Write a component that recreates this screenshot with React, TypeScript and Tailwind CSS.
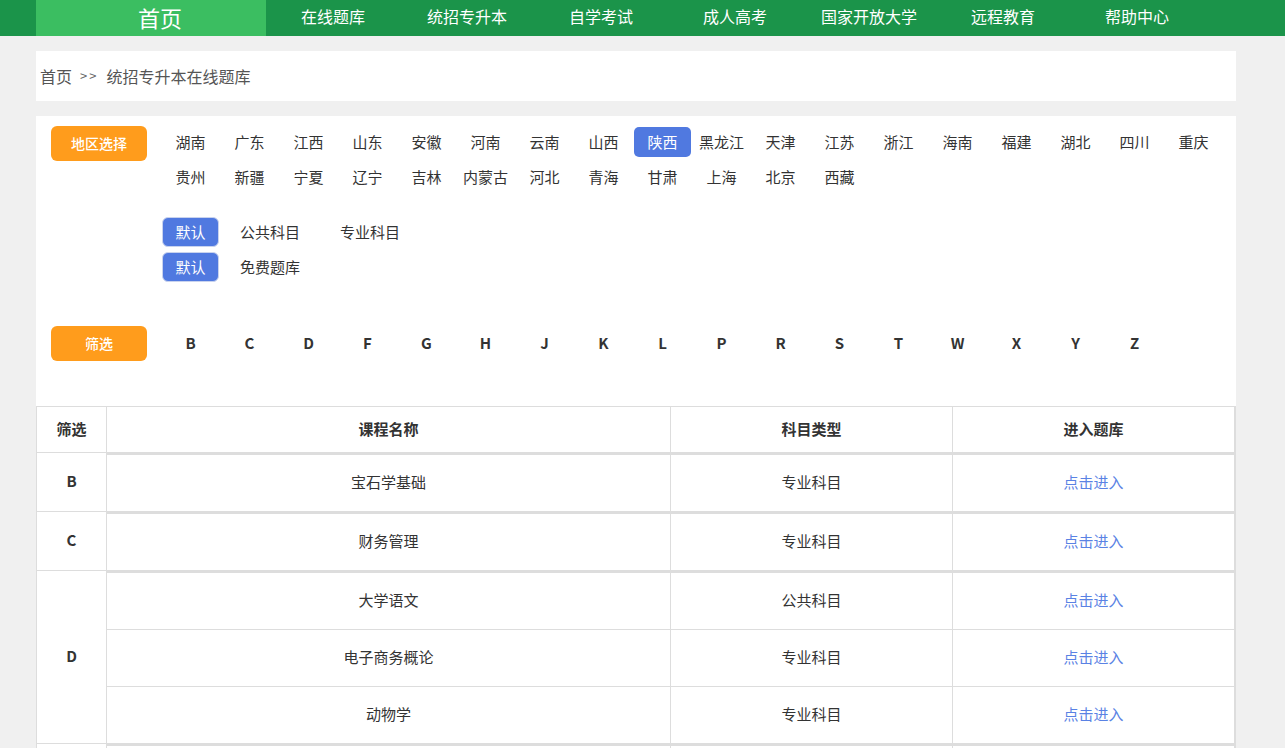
import React from "react";

const navItems = ["在线题库", "统招专升本", "自学考试", "成人高考", "国家开放大学", "远程教育", "帮助中心"];
const provinces = [
  "湖南", "广东", "江西", "山东", "安徽", "河南", "云南", "山西", "陕西", "黑龙江", "天津", "江苏", "浙江", "海南", "福建", "湖北", "四川", "重庆",
  "贵州", "新疆", "宁夏", "辽宁", "吉林", "内蒙古", "河北", "青海", "甘肃", "上海", "北京", "西藏",
];
const letters = ["B", "C", "D", "F", "G", "H", "J", "K", "L", "P", "R", "S", "T", "W", "X", "Y", "Z"];

const groups: { letter: string; rows: [string, string][] }[] = [
  { letter: "B", rows: [["宝石学基础", "专业科目"]] },
  { letter: "C", rows: [["财务管理", "专业科目"]] },
  { letter: "D", rows: [["大学语文", "公共科目"], ["电子商务概论", "专业科目"], ["动物学", "专业科目"]] },
  { letter: "F", rows: [["法学概论", "专业科目"], ["服装设计基础", "专业科目"]] },
  { letter: "G", rows: [["高等数学", "公共科目"], ["管理学原理", "专业科目"]] },
];

export default function App() {
  return (
    <div className="min-h-[748px] bg-[#f0f0f0] font-['Noto_Sans_CJK_SC','Noto_Sans',sans-serif] text-[#333]">
      {/* nav */}
      <div className="h-[36px] w-full bg-[#1b944a]">
        <div className="ml-[36px] flex h-[36px] w-[1200px]">
          <div className="flex w-[230px] items-center justify-center bg-[#3bbe61] pb-[3px] pl-[18px] text-[22px] leading-none text-white">首页</div>
          {navItems.map((n) => (
            <div key={n} className="flex w-[134px] items-center justify-center pb-[4px] text-[16px] leading-none text-white">
              {n}
            </div>
          ))}
        </div>
      </div>

      {/* breadcrumb */}
      <div className="ml-[36px] mt-[15px] flex h-[50px] w-[1200px] items-center bg-white pl-[4px] text-[16px] text-[#555]">
        <span>首页</span>
        <span className="mx-[8px] text-[13px] tracking-[2px] text-[#666]">&gt;&gt;</span>
        <span>统招专升本在线题库</span>
      </div>

      {/* main */}
      <div className="ml-[36px] mt-[15px] w-[1200px] bg-white pt-[10px]">
        {/* region */}
        <div className="flex pl-[15px]">
          <div className="flex h-[35px] w-[96px] shrink-0 items-center justify-center rounded-[6px] bg-[#ff9c1c] text-[14px] font-medium text-white">
            地区选择
          </div>
          <div className="ml-[14px] mt-[1px] flex w-[1062px] flex-wrap">
            {provinces.map((p) => (
              <div key={p} className="h-[35px] w-[59px] px-[1px] pb-[5px]">
                <div
                  className={
                    p === "陕西"
                      ? "flex h-[30px] items-center justify-center rounded-[5px] bg-[#5079e0] text-[15px] text-white"
                      : "flex h-[30px] items-center justify-center text-[15px] text-[#333]"
                  }
                >
                  {p}
                </div>
              </div>
            ))}
          </div>
        </div>

        {/* subject type */}
        <div className="ml-[125px] mt-[20px]">
          <div className="flex h-[35px]">
            <div className="w-[59px] px-[1px] pb-[5px]">
              <div className="flex h-[30px] items-center justify-center rounded-[6px] border border-[#c9d3ee] bg-[#5079e0] text-[15px] text-white">默认</div>
            </div>
            <div className="flex h-[30px] w-[100px] items-center justify-center text-[15px]">公共科目</div>
            <div className="flex h-[30px] w-[100px] items-center justify-center text-[15px]">专业科目</div>
          </div>
          <div className="flex h-[35px]">
            <div className="w-[59px] px-[1px] pb-[5px]">
              <div className="flex h-[30px] items-center justify-center rounded-[6px] border border-[#c9d3ee] bg-[#5079e0] text-[15px] text-white">默认</div>
            </div>
            <div className="flex h-[30px] w-[100px] items-center justify-center text-[15px]">免费题库</div>
          </div>
        </div>

        {/* filter letters */}
        <div className="mt-[39px] flex pl-[15px]">
          <div className="flex h-[35px] w-[96px] shrink-0 items-center justify-center rounded-[6px] bg-[#ff9c1c] text-[14px] font-medium text-white">
            筛选
          </div>
          <div className="ml-[14px] flex">
            {letters.map((l) => (
              <div key={l} className="flex h-[35px] w-[59px] items-center justify-center text-[15px] font-bold text-[#333]">
                {l}
              </div>
            ))}
          </div>
        </div>

        {/* table */}
        <div className="mt-[45px] border-l border-t border-[#dddddd] text-[15px]">
          <div className="flex h-[46px] border-b border-[#dddddd] font-bold">
            <div className="flex w-[70px] items-center justify-center border-r border-[#dddddd]">筛选</div>
            <div className="flex w-[564px] items-center justify-center border-r border-[#dddddd]">课程名称</div>
            <div className="flex w-[282px] items-center justify-center border-r border-[#dddddd]">科目类型</div>
            <div className="flex w-[283px] items-center justify-center border-r-2 border-[#dddddd]">进入题库</div>
          </div>
          {groups.map((g) => (
            <div key={g.letter} className="flex">
              <div className="flex w-[70px] shrink-0 items-center justify-center border-b border-r border-[#dddddd] pb-[2px] font-bold">
                {g.letter}
              </div>
              <div className="flex flex-col border-t-2 border-[#dddddd]">
                {g.rows.map(([name, type]) => (
                  <div key={name} className="flex h-[57px] border-b border-[#dddddd]">
                    <div className="flex w-[564px] items-center justify-center border-r border-[#dddddd] pb-[2px]">{name}</div>
                    <div className="flex w-[282px] items-center justify-center border-r border-[#dddddd] pb-[2px]">{type}</div>
                    <div className="flex w-[283px] items-center justify-center border-r-2 border-[#dddddd] pb-[2px] text-[#5a82e4]">点击进入</div>
                  </div>
                ))}
              </div>
            </div>
          ))}
        </div>
      </div>
    </div>
  );
}
